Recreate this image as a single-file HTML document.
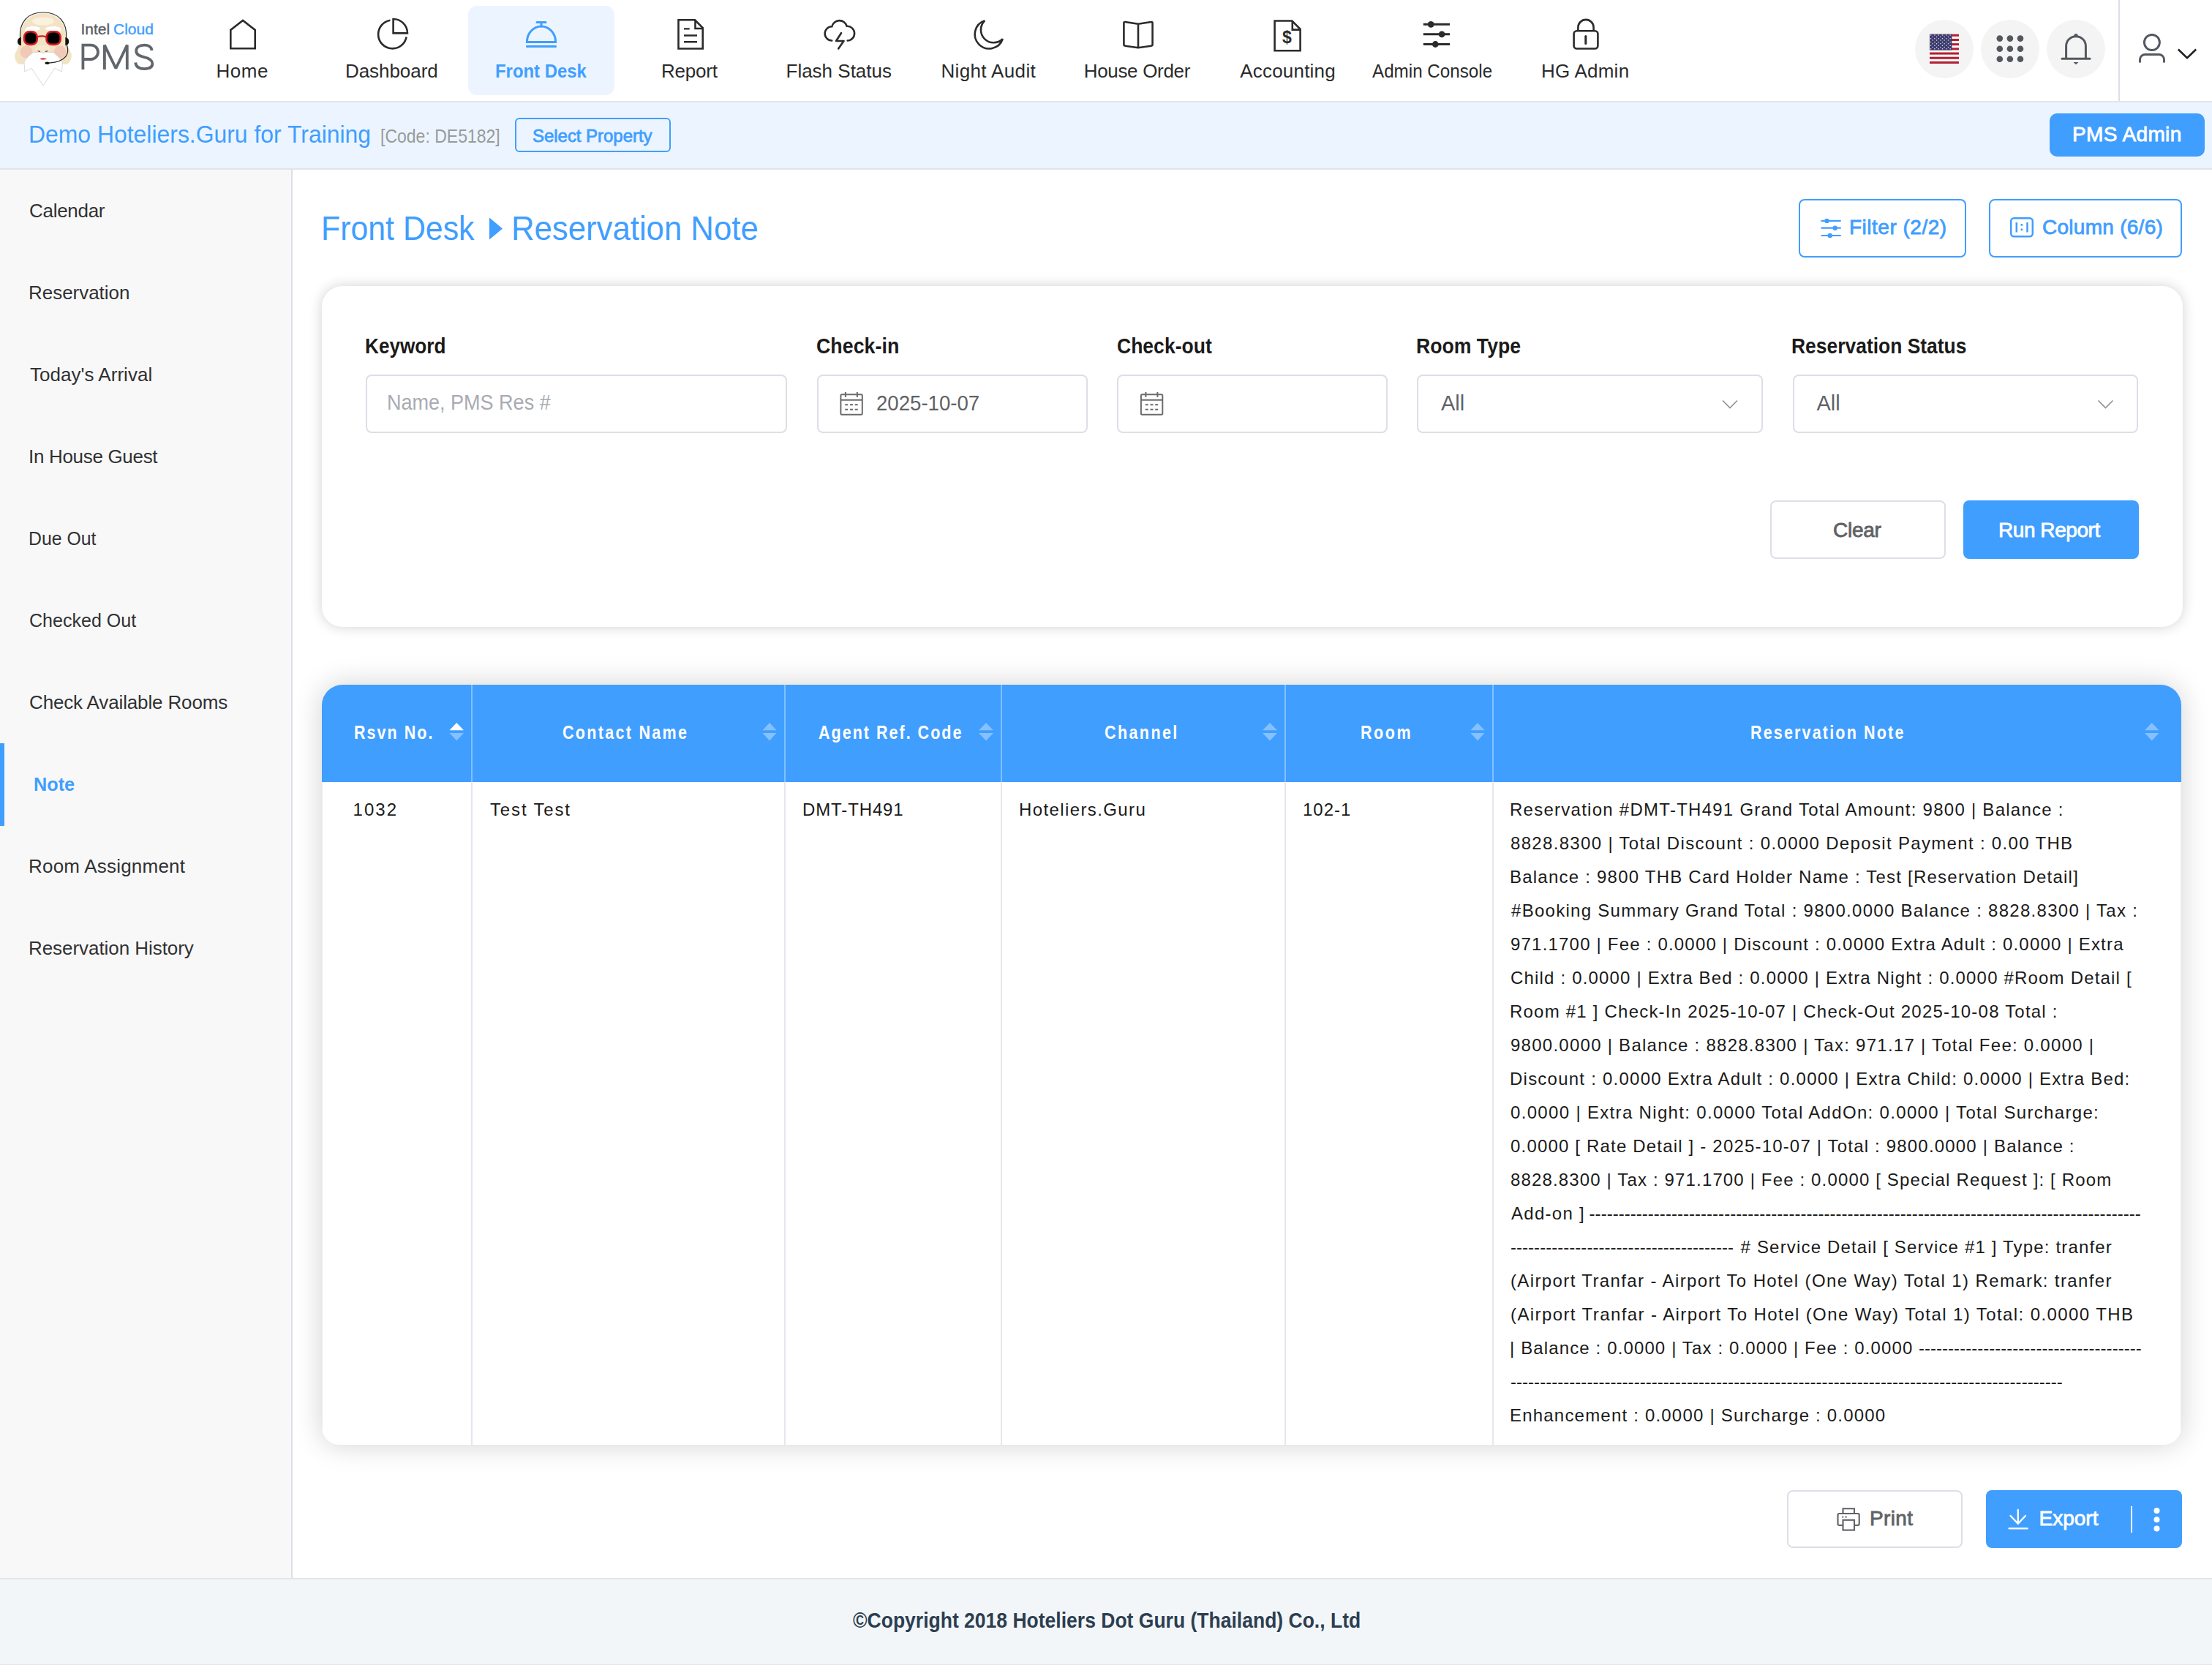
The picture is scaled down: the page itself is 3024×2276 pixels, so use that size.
<!DOCTYPE html>
<html><head><meta charset="utf-8">
<style>
*{margin:0;padding:0;box-sizing:border-box}
html,body{width:3024px;height:2276px;overflow:hidden;background:#fff;font-family:"Liberation Sans",sans-serif}
.a{position:absolute}
.t{position:absolute;line-height:1;white-space:nowrap}
svg{position:absolute;left:0;top:0;overflow:visible}
</style></head><body>

<!-- header -->
<div class="a" style="left:0;top:0;width:3024px;height:138px;background:#fff"></div>
<div class="a" style="left:0;top:138px;width:3024px;height:2px;background:#e1e4e9"></div>
<div class="a" style="left:640px;top:8px;width:200px;height:122px;border-radius:12px;background:#ecf5ff"></div>
<div class="a" style="left:2618px;top:27px;width:80px;height:80px;border-radius:50%;background:#f4f4f5"></div>
<div class="a" style="left:2708px;top:27px;width:80px;height:80px;border-radius:50%;background:#f4f4f5"></div>
<div class="a" style="left:2798px;top:27px;width:80px;height:80px;border-radius:50%;background:#f4f4f5"></div>
<div class="a" style="left:2896px;top:0;width:2px;height:138px;background:#dcdfe6"></div>

<!-- subheader -->
<div class="a" style="left:0;top:140px;width:3024px;height:90px;background:#ecf5ff"></div>
<div class="a" style="left:0;top:230px;width:3024px;height:2px;background:#e1e4e9"></div>
<div class="a" style="left:704px;top:161px;width:213px;height:47px;border:2px solid #409eff;border-radius:6px"></div>
<div class="a" style="left:2802px;top:155px;width:212px;height:59px;border-radius:10px;background:#409eff"></div>

<!-- sidebar -->
<div class="a" style="left:0;top:232px;width:398px;height:1925px;background:#f8f8f8"></div>
<div class="a" style="left:398px;top:232px;width:2px;height:1925px;background:#dcdfe6"></div>
<div class="a" style="left:0;top:1016px;width:6px;height:113px;background:#409eff"></div>

<!-- title buttons -->
<div class="a" style="left:2459px;top:272px;width:229px;height:80px;border:2px solid #409eff;border-radius:8px"></div>
<div class="a" style="left:2719px;top:272px;width:264px;height:80px;border:2px solid #409eff;border-radius:8px"></div>

<!-- filter card -->
<div class="a" style="left:440px;top:391px;width:2544px;height:466px;border-radius:28px;background:#fff;box-shadow:0 0 18px rgba(0,0,0,0.18)"></div>
<div class="a" style="left:500px;top:512px;width:576px;height:80px;border:2px solid #dcdfe6;border-radius:8px"></div>
<div class="a" style="left:1117px;top:512px;width:370px;height:80px;border:2px solid #dcdfe6;border-radius:8px"></div>
<div class="a" style="left:1527px;top:512px;width:370px;height:80px;border:2px solid #dcdfe6;border-radius:8px"></div>
<div class="a" style="left:1937px;top:512px;width:473px;height:80px;border:2px solid #dcdfe6;border-radius:8px"></div>
<div class="a" style="left:2451px;top:512px;width:472px;height:80px;border:2px solid #dcdfe6;border-radius:8px"></div>
<div class="a" style="left:2420px;top:684px;width:240px;height:80px;border:2px solid #dcdfe6;border-radius:8px"></div>
<div class="a" style="left:2684px;top:684px;width:240px;height:80px;border-radius:8px;background:#409eff"></div>

<!-- table -->
<div class="a" style="left:440px;top:936px;width:2542px;height:1039px;border-radius:28px 28px 24px 24px;background:#fff;box-shadow:0 0 38px rgba(0,0,0,0.18);overflow:hidden">
  <div class="a" style="left:0;top:133px;width:1px;height:906px;background:#ebeef5"></div>
  <div class="a" style="left:2541px;top:133px;width:1px;height:906px;background:#ebeef5"></div>
  <div class="a" style="left:0;top:0;width:2542px;height:133px;background:#409eff"></div>
  <div class="a" style="left:204px;top:0;width:2px;height:133px;background:rgba(255,255,255,0.35)"></div>
  <div class="a" style="left:632px;top:0;width:2px;height:133px;background:rgba(255,255,255,0.35)"></div>
  <div class="a" style="left:928px;top:0;width:2px;height:133px;background:rgba(255,255,255,0.35)"></div>
  <div class="a" style="left:1316px;top:0;width:2px;height:133px;background:rgba(255,255,255,0.35)"></div>
  <div class="a" style="left:1600px;top:0;width:2px;height:133px;background:rgba(255,255,255,0.35)"></div>
  <div class="a" style="left:204px;top:133px;width:2px;height:906px;background:#e4e7ed"></div>
  <div class="a" style="left:632px;top:133px;width:2px;height:906px;background:#e4e7ed"></div>
  <div class="a" style="left:928px;top:133px;width:2px;height:906px;background:#e4e7ed"></div>
  <div class="a" style="left:1316px;top:133px;width:2px;height:906px;background:#e4e7ed"></div>
  <div class="a" style="left:1600px;top:133px;width:2px;height:906px;background:#e4e7ed"></div>
</div>

<!-- print / export -->
<div class="a" style="left:2443px;top:2037px;width:240px;height:79px;border:2px solid #dcdfe6;border-radius:8px"></div>
<div class="a" style="left:2715px;top:2037px;width:268px;height:79px;border-radius:8px;background:#409eff"></div>
<div class="a" style="left:2913px;top:2059px;width:2px;height:36px;background:#fff"></div>

<!-- footer -->
<div class="a" style="left:0;top:2157px;width:3024px;height:2px;background:#e2e6ea"></div>
<div class="a" style="left:0;top:2159px;width:3024px;height:117px;background:#f3f6f9"></div>
<div class="a" style="left:0;top:2275px;width:3024px;height:1px;background:#e2e6ea"></div>

<!-- icons -->
<svg width="3024" height="2276" viewBox="0 0 3024 2276">
 <g fill="none" stroke="#2b2b2b" stroke-width="2.6">
  <!-- home -->
  <path d="M315.3 66.2 V41 L332 28 L348.7 41 V66.2 Z" stroke-linejoin="miter"/>
  <!-- dashboard -->
  <path d="M533.5 27.8 A19.4 19.4 0 1 0 555.6 50.4"/>
  <path d="M537.6 26 V45.4 H557 A19.4 19.4 0 0 0 537.6 26 Z"/>
  <!-- report -->
  <path d="M927.5 27.3 H950 L960.7 38 V66.5 H927.5 Z"/>
  <path d="M950.5 27.3 V39 H960.7"/>
  <path d="M935 39.4 H942.7 M935 48.5 H953 M935 57.3 H953" stroke-width="2.4"/>
  <!-- flash -->
  <path d="M1137.2 55.5 A9.6 9.6 0 0 1 1137.3 36.3 A10.6 10.6 0 0 1 1157.8 35.8 A9.8 9.8 0 0 1 1158.7 55.5" stroke-linecap="round"/>
  <path d="M1150 45.2 L1143 56 H1153.5 L1146.2 66.5" stroke-linecap="round" stroke-linejoin="round"/>
  <!-- moon -->
  <path d="M1346.2 28.2 A19.6 19.6 0 1 0 1370.8 53.3 A16.5 16.5 0 0 1 1346.2 28.2 Z" stroke-linejoin="miter"/>
  <!-- book -->
  <path d="M1556 32.8 L1538.3 30 Q1536.4 29.8 1536.4 31.7 V60.8 Q1536.4 62.4 1538.2 62.7 L1556 65.3 L1573.8 62.7 Q1575.6 62.4 1575.6 60.8 V31.7 Q1575.6 29.8 1573.7 30 Z M1556 32.8 V65.3" stroke-linejoin="round"/>
  <!-- accounting -->
  <path d="M1742.6 28.5 H1766.3 L1777.6 39.8 V69.3 H1742.6 Z"/>
  <path d="M1766.8 28.5 V40.6 H1777.6"/>
  <!-- admin console -->
  <path d="M1945.8 33.3 H1982 M1945.8 46.8 H1982 M1945.8 60.5 H1982" stroke-width="3"/>
  <!-- lock -->
  <rect x="2151.6" y="42.2" width="32.8" height="24.3" rx="4"/>
  <path d="M2157.4 42 V37.5 A10.6 10.6 0 0 1 2178.6 37.5 V42"/>
  <path d="M2167.8 49.5 V59.5" stroke-width="3" stroke-linecap="round"/>
 </g>
 <g fill="#2b2b2b">
  <circle cx="1956.2" cy="33.3" r="4.4"/><circle cx="1971.1" cy="46.8" r="4.4"/><circle cx="1962.3" cy="60.5" r="4.4"/>
  <text x="1753" y="58.6" font-family="Liberation Sans" font-weight="700" font-size="23">$</text>
 </g>
 <!-- front desk bell -->
 <g fill="none" stroke="#409eff" stroke-width="3" stroke-linecap="round">
  <path d="M720.4 57.5 A19.6 21.5 0 0 1 759.6 57.5 Z" stroke-linecap="butt"/>
  <path d="M734 30.5 H746 M740 31 V36 M720.4 63.4 H759.6"/>
 </g>
 <!-- header right icons -->
 <g>
  <rect x="2638" y="46.75" width="40" height="40.25" fill="#fff"/>
  <g fill="#b22234">
   <rect x="2638" y="46.75" width="40" height="3.1"/><rect x="2638" y="52.94" width="40" height="3.1"/><rect x="2638" y="59.13" width="40" height="3.1"/>
   <rect x="2638" y="65.32" width="40" height="3.1"/><rect x="2638" y="71.51" width="40" height="3.1"/><rect x="2638" y="77.7" width="40" height="3.1"/>
   <rect x="2638" y="83.9" width="40" height="3.1"/>
  </g>
  <rect x="2638" y="46.75" width="30.4" height="21.75" fill="#3c3b6e"/>
  <g fill="#e6e8f0"><circle cx="2639.60" cy="48.05" r="0.75"/><circle cx="2644.90" cy="48.05" r="0.75"/><circle cx="2650.20" cy="48.05" r="0.75"/><circle cx="2655.50" cy="48.05" r="0.75"/><circle cx="2660.80" cy="48.05" r="0.75"/><circle cx="2666.10" cy="48.05" r="0.75"/><circle cx="2642.25" cy="50.40" r="0.75"/><circle cx="2647.55" cy="50.40" r="0.75"/><circle cx="2652.85" cy="50.40" r="0.75"/><circle cx="2658.15" cy="50.40" r="0.75"/><circle cx="2663.45" cy="50.40" r="0.75"/><circle cx="2639.60" cy="52.75" r="0.75"/><circle cx="2644.90" cy="52.75" r="0.75"/><circle cx="2650.20" cy="52.75" r="0.75"/><circle cx="2655.50" cy="52.75" r="0.75"/><circle cx="2660.80" cy="52.75" r="0.75"/><circle cx="2666.10" cy="52.75" r="0.75"/><circle cx="2642.25" cy="55.10" r="0.75"/><circle cx="2647.55" cy="55.10" r="0.75"/><circle cx="2652.85" cy="55.10" r="0.75"/><circle cx="2658.15" cy="55.10" r="0.75"/><circle cx="2663.45" cy="55.10" r="0.75"/><circle cx="2639.60" cy="57.45" r="0.75"/><circle cx="2644.90" cy="57.45" r="0.75"/><circle cx="2650.20" cy="57.45" r="0.75"/><circle cx="2655.50" cy="57.45" r="0.75"/><circle cx="2660.80" cy="57.45" r="0.75"/><circle cx="2666.10" cy="57.45" r="0.75"/><circle cx="2642.25" cy="59.80" r="0.75"/><circle cx="2647.55" cy="59.80" r="0.75"/><circle cx="2652.85" cy="59.80" r="0.75"/><circle cx="2658.15" cy="59.80" r="0.75"/><circle cx="2663.45" cy="59.80" r="0.75"/><circle cx="2639.60" cy="62.15" r="0.75"/><circle cx="2644.90" cy="62.15" r="0.75"/><circle cx="2650.20" cy="62.15" r="0.75"/><circle cx="2655.50" cy="62.15" r="0.75"/><circle cx="2660.80" cy="62.15" r="0.75"/><circle cx="2666.10" cy="62.15" r="0.75"/><circle cx="2642.25" cy="64.50" r="0.75"/><circle cx="2647.55" cy="64.50" r="0.75"/><circle cx="2652.85" cy="64.50" r="0.75"/><circle cx="2658.15" cy="64.50" r="0.75"/><circle cx="2663.45" cy="64.50" r="0.75"/><circle cx="2639.60" cy="66.85" r="0.75"/><circle cx="2644.90" cy="66.85" r="0.75"/><circle cx="2650.20" cy="66.85" r="0.75"/><circle cx="2655.50" cy="66.85" r="0.75"/><circle cx="2660.80" cy="66.85" r="0.75"/><circle cx="2666.10" cy="66.85" r="0.75"/></g>
  <g fill="#54585e">
   <circle cx="2733.8" cy="52.6" r="4.3"/><circle cx="2747.9" cy="52.6" r="4.3"/><circle cx="2762" cy="52.6" r="4.3"/>
   <circle cx="2733.8" cy="66.7" r="4.3"/><circle cx="2747.9" cy="66.7" r="4.3"/><circle cx="2762" cy="66.7" r="4.3"/>
   <circle cx="2733.8" cy="80.8" r="4.3"/><circle cx="2747.9" cy="80.8" r="4.3"/><circle cx="2762" cy="80.8" r="4.3"/>
  </g>
  <g fill="none" stroke="#54585e" stroke-width="3">
   <path d="M2824.6 80 V63 A13.4 13.4 0 0 1 2851.4 63 V80"/>
   <path d="M2819 80.3 H2857" stroke-linecap="round"/>
  </g>
  <g fill="#54585e">
   <path d="M2834.5 85 H2841.5 L2838 88.3 Z"/>
   <circle cx="2838" cy="48.6" r="2.6"/>
  </g>
  <g fill="none" stroke="#54585e" stroke-width="2.9" stroke-linecap="round">
   <circle cx="2941.9" cy="58" r="10.5"/>
   <path d="M2925.5 84.6 V81.5 A7 7 0 0 1 2932.5 74.5 H2951.5 A7 7 0 0 1 2958.5 81.5 V84.6"/>
  </g>
  <path d="M2977.8 67.5 L2990 79.3 L3002.2 67.5" fill="none" stroke="#222" stroke-width="2.6"/>
 </g>

 <!-- PMS logo text -->
 <g fill="none" stroke="#62666d" stroke-width="3.8">
  <path d="M113.4 95 V61.6 H124.3 A9.7 9.7 0 0 1 124.3 81 H113.4"/>
  <path d="M142.9 95 V61.6 L158.4 93.5 L173.8 61.6 V95" stroke-linejoin="bevel"/>
  <path d="M207.6 69 C207.2 64 202.5 61.6 197.2 61.6 C190.5 61.6 186.2 64.8 186.2 69.6 C186.2 75 191 76.7 197.2 78.1 C203.6 79.6 208.4 81.8 208.4 87.1 C208.4 92 203.6 94.1 197.2 94.1 C190.7 94.1 185.6 91.5 185.2 85.5"/>
 </g>

 <!-- logo face -->
 <g>
  <path d="M59 18.3 C77 18.3 89 30 90 48 C90.5 58 93 66 97.5 73 C98.5 78 97 84 93 87 C90 89 86 88 84 86 L34 86 C32 88 28 89 25 87 C21 84 19.5 78 20.5 73 C25 66 27.5 58 28 48 C29 30 41 18.3 59 18.3 Z" fill="#f3e3c5"/>
  <ellipse cx="59" cy="29" rx="15" ry="5.5" fill="#faf1de"/>
  <circle cx="36" cy="71" r="8.5" fill="#f0c2b2" opacity="0.8"/>
  <circle cx="82" cy="71" r="8.5" fill="#f0c2b2" opacity="0.8"/>
  <path d="M33.8 42.4 Q35 36 44 36 Q53 36 55 39 Q54 42 45 42.4 Z" fill="#fff"/>
  <path d="M84 42.4 Q83 36 74 36 Q65 36 61.6 39 Q63 42 73 42.4 Z" fill="#fff"/>
  <rect x="33.1" y="43.3" width="17.6" height="17.6" rx="7" fill="#000" stroke="#d41c24" stroke-width="2.6"/>
  <rect x="63.5" y="43.3" width="19.2" height="17.6" rx="7" fill="#000" stroke="#d41c24" stroke-width="2.6"/>
  <path d="M50.5 50.8 Q57 48 63.5 50.8" fill="none" stroke="#d41c24" stroke-width="2.2"/>
  <path d="M27.5 52 C26 30 38 17 59 17 C80 17 92 30 90.7 52" fill="none" stroke="#333" stroke-width="1.2"/>
  <path d="M28.9 51 A5 5.6 0 0 0 28.9 62.2 Z" fill="#111"/>
  <path d="M89.3 51 A5 5.6 0 0 1 89.3 62.2 Z" fill="#111"/>
  <ellipse cx="58.5" cy="67" rx="10" ry="5.5" fill="#f7e9cf"/>
  <path d="M51.5 70 Q53 69.5 55 70.6 M62 70.6 Q64 69.5 65.5 70" stroke="#6b4a2a" stroke-width="1.2" fill="none"/>
  <path d="M45 72 C51 70.5 55 71.5 59 72.5 C63 71.5 67 70.5 73.5 72 C78 76 83 80 85.4 84.7 L84.7 98 L74.8 93.3 L59 117 L43 93.3 L33.8 98 L33 84.7 C35 80 40 76 45 72 Z" fill="#fff" stroke="#cfcfcf" stroke-width="0.8"/>
  <path d="M54 80.5 Q59 77.5 64 80.5 Q59 83 54 80.5 Z" fill="#d9534f"/>
  <path d="M91.5 62 C95 72 92 84 67 86.2" fill="none" stroke="#222" stroke-width="1.2"/>
  <ellipse cx="64.5" cy="86.3" rx="3" ry="1.7" fill="#111"/>
 </g>

 <!-- title triangle -->
 <path d="M669 297.5 L687 312.5 L669 327.5 Z" fill="#409eff"/>

 <!-- filter icon -->
 <g stroke="#409eff" stroke-width="2.2" fill="none">
  <path d="M2489.5 301.9 H2516.7 M2489.5 311.7 H2516.7 M2489.5 322 H2516.7"/>
 </g>
 <g fill="#409eff"><circle cx="2497.5" cy="301.9" r="3.2"/><circle cx="2508.7" cy="311.7" r="3.2"/><circle cx="2501.7" cy="322" r="3.2"/></g>
 <!-- column icon -->
 <g stroke="#409eff" stroke-width="2.5" fill="none">
  <rect x="2749.2" y="298.2" width="29.6" height="25" rx="4"/>
  <path d="M2756.8 304 V317.5 M2771.5 304 V317.5"/>
 </g>
 <g fill="#409eff"><circle cx="2763.9" cy="307.3" r="1.5"/><circle cx="2763.9" cy="313.7" r="1.5"/></g>

 <!-- calendar icons -->
 <g id="cal" fill="none" stroke="#6b6b6b" stroke-width="2">
  <rect x="1149.4" y="539.3" width="29.4" height="27.4" rx="1.5"/>
  <path d="M1149.4 546.7 H1178.8 M1155.9 536 V543 M1171.9 536 V543"/>
  <path d="M1155.2 553.3 H1159.2 M1162 553.3 H1166 M1168.7 553.3 H1172.7 M1155.2 559.8 H1159.2 M1162 559.8 H1166 M1168.7 559.8 H1172.7"/>
 </g>
 <g fill="none" stroke="#6b6b6b" stroke-width="2" transform="translate(410.5 0)">
  <rect x="1149.4" y="539.3" width="29.4" height="27.4" rx="1.5"/>
  <path d="M1149.4 546.7 H1178.8 M1155.9 536 V543 M1171.9 536 V543"/>
  <path d="M1155.2 553.3 H1159.2 M1162 553.3 H1166 M1168.7 553.3 H1172.7 M1155.2 559.8 H1159.2 M1162 559.8 H1166 M1168.7 559.8 H1172.7"/>
 </g>
 <!-- dropdown chevrons -->
 <path d="M2355 547.5 L2365 557.5 L2375 547.5" fill="none" stroke="#909399" stroke-width="1.7"/>
 <path d="M2868.5 547.5 L2878.5 557.5 L2888.5 547.5" fill="none" stroke="#909399" stroke-width="1.7"/>

 <!-- sort icons -->
 <g>
  <path d="M614.5 998.3 L624.25 988 L634 998.3 Z" fill="#fff"/>
  <path d="M614.5 1002 L624.25 1012.5 L634 1002 Z" fill="rgba(255,255,255,0.36)"/>
  <path d="M1042.5 998.3 L1052 988 L1061.5 998.3 Z M1042.5 1002 L1052 1012.5 L1061.5 1002 Z" fill="rgba(255,255,255,0.36)"/>
  <path d="M1338 998.3 L1348 988 L1358 998.3 Z M1338 1002 L1348 1012.5 L1358 1002 Z" fill="rgba(255,255,255,0.36)"/>
  <path d="M1726 998.3 L1736 988 L1746 998.3 Z M1726 1002 L1736 1012.5 L1746 1002 Z" fill="rgba(255,255,255,0.36)"/>
  <path d="M2010.5 998.3 L2020 988 L2029.5 998.3 Z M2010.5 1002 L2020 1012.5 L2029.5 1002 Z" fill="rgba(255,255,255,0.36)"/>
  <path d="M2932 998.3 L2941.75 988 L2951.5 998.3 Z M2932 1002 L2941.75 1012.5 L2951.5 1002 Z" fill="rgba(255,255,255,0.36)"/>
 </g>

 <!-- print icon -->
 <g fill="none" stroke="#606266" stroke-width="2.1">
  <path d="M2519.5 2068 V2062.3 H2535 V2068"/>
  <path d="M2519.5 2085 H2514.5 Q2512.5 2085 2512.5 2083 V2071 Q2512.5 2069 2514.5 2069 H2539.7 Q2541.7 2069 2541.7 2071 V2083 Q2541.7 2085 2539.7 2085 H2535"/>
  <rect x="2519.5" y="2077.8" width="15.5" height="13.8"/>
 </g>
 <g fill="#606266"><rect x="2518.2" y="2072.6" width="2" height="2"/><rect x="2522.6" y="2072.6" width="2" height="2"/></g>
 <!-- export icon -->
 <g fill="none" stroke="#fff" stroke-width="2.3" stroke-linecap="round">
  <path d="M2758.8 2064 V2083 M2748.5 2072 L2758.8 2082.8 L2769 2072"/>
  <path d="M2746.5 2089.3 H2771.8"/>
 </g>
 <g fill="#fff"><circle cx="2948.5" cy="2065" r="4"/><circle cx="2948.5" cy="2077.3" r="4"/><circle cx="2948.5" cy="2089.5" r="4"/></g>
</svg>

<div class="t" style="top:83.90px;font-size:26px;color:#2b2b2b;letter-spacing:0.500px;left:295.50px;">Home</div>
<div class="t" style="top:83.90px;font-size:26px;color:#2b2b2b;letter-spacing:-0.062px;left:472.00px;">Dashboard</div>
<div class="t" style="top:83.90px;font-size:26px;color:#409eff;font-weight:700;left:676.58px;transform:scaleX(0.9185185185185185);transform-origin:0 0;">Front Desk</div>
<div class="t" style="top:83.90px;font-size:26px;color:#2b2b2b;letter-spacing:-0.200px;left:904.00px;">Report</div>
<div class="t" style="top:83.90px;font-size:26px;color:#2b2b2b;left:1074.50px;">Flash Status</div>
<div class="t" style="top:83.90px;font-size:26px;color:#2b2b2b;letter-spacing:0.360px;left:1286.40px;">Night Audit</div>
<div class="t" style="top:83.90px;font-size:26px;color:#2b2b2b;letter-spacing:-0.320px;left:1481.70px;">House Order</div>
<div class="t" style="top:83.90px;font-size:26px;color:#2b2b2b;letter-spacing:0.189px;left:1695.30px;">Accounting</div>
<div class="t" style="top:83.90px;font-size:26px;color:#2b2b2b;left:1876.00px;transform:scaleX(0.9308571428571429);transform-origin:0 0;">Admin Console</div>
<div class="t" style="top:83.90px;font-size:26px;color:#2b2b2b;letter-spacing:0.229px;left:2107.00px;">HG Admin</div>
<div class="t" style="top:29.15px;font-size:21px;color:#5a5e66;left:110.50px;-webkit-text-stroke:0.4px #5a5e66;">Intel</div>
<div class="t" style="top:29.15px;font-size:21px;color:#409eff;left:155.00px;-webkit-text-stroke:0.4px #409eff;">Cloud</div>
<div class="t" style="top:166.95px;font-size:33px;color:#409eff;left:39.07px;transform:scaleX(0.9666666666666667);transform-origin:0 0;">Demo Hoteliers.Guru for Training</div>
<div class="t" style="top:173.75px;font-size:25px;color:#9a9a9a;left:520.08px;transform:scaleX(0.9204545454545454);transform-origin:0 0;">[Code: DE5182]</div>
<div class="t" style="top:173.60px;font-size:24px;color:#409eff;letter-spacing:-0.036px;left:728.00px;-webkit-text-stroke:0.8px #409eff;">Select Property</div>
<div class="t" style="top:170.20px;font-size:28px;color:#fff;letter-spacing:0.375px;left:2833.00px;-webkit-text-stroke:0.8px #fff;">PMS Admin</div>
<div class="t" style="top:274.90px;font-size:26px;color:#303133;letter-spacing:-0.286px;left:40.00px;">Calendar</div>
<div class="t" style="top:386.90px;font-size:26px;color:#303133;letter-spacing:-0.030px;left:39.00px;">Reservation</div>
<div class="t" style="top:498.90px;font-size:26px;color:#303133;letter-spacing:0.029px;left:41.00px;">Today's Arrival</div>
<div class="t" style="top:610.90px;font-size:26px;color:#303133;letter-spacing:-0.315px;left:39.00px;">In House Guest</div>
<div class="t" style="top:722.90px;font-size:26px;color:#303133;left:39.09px;transform:scaleX(0.9536842105263157);transform-origin:0 0;">Due Out</div>
<div class="t" style="top:834.90px;font-size:26px;color:#303133;left:40.04px;transform:scaleX(0.9635761589403974);transform-origin:0 0;">Checked Out</div>
<div class="t" style="top:946.90px;font-size:26px;color:#303133;letter-spacing:-0.145px;left:40.00px;">Check Available Rooms</div>
<div class="t" style="top:1058.90px;font-size:26px;color:#409eff;font-weight:700;left:46.03px;transform:scaleX(0.9714285714285714);transform-origin:0 0;">Note</div>
<div class="t" style="top:1170.90px;font-size:26px;color:#303133;letter-spacing:0.214px;left:39.00px;">Room Assignment</div>
<div class="t" style="top:1282.90px;font-size:26px;color:#303133;letter-spacing:-0.056px;left:39.00px;">Reservation History</div>
<div class="t" style="top:287.55px;font-size:47px;color:#409eff;left:438.85px;transform:scaleX(0.911504424778761);transform-origin:0 0;">Front Desk</div>
<div class="t" style="top:287.55px;font-size:47px;color:#409eff;left:699.28px;transform:scaleX(0.9299719887955182);transform-origin:0 0;">Reservation Note</div>
<div class="t" style="top:297.20px;font-size:28px;color:#409eff;letter-spacing:0.500px;left:2528.00px;-webkit-text-stroke:0.8px #409eff;">Filter (2/2)</div>
<div class="t" style="top:297.20px;font-size:28px;color:#409eff;letter-spacing:0.273px;left:2792.00px;-webkit-text-stroke:0.8px #409eff;">Column (6/6)</div>
<div class="t" style="top:459.35px;font-size:29px;color:#1a1a1a;font-weight:700;left:498.69px;transform:scaleX(0.9025210084033614);transform-origin:0 0;">Keyword</div>
<div class="t" style="top:459.35px;font-size:29px;color:#1a1a1a;font-weight:700;left:1116.08px;transform:scaleX(0.925);transform-origin:0 0;">Check-in</div>
<div class="t" style="top:459.35px;font-size:29px;color:#1a1a1a;font-weight:700;left:1526.59px;transform:scaleX(0.9148936170212766);transform-origin:0 0;">Check-out</div>
<div class="t" style="top:459.35px;font-size:29px;color:#1a1a1a;font-weight:700;left:1935.66px;transform:scaleX(0.9183006535947712);transform-origin:0 0;">Room Type</div>
<div class="t" style="top:459.35px;font-size:29px;color:#1a1a1a;font-weight:700;left:2449.18px;transform:scaleX(0.9115384615384615);transform-origin:0 0;">Reservation Status</div>
<div class="t" style="top:536.35px;font-size:29px;color:#a8abb2;left:529.14px;transform:scaleX(0.9315126050420167);transform-origin:0 0;">Name, PMS Res #</div>
<div class="t" style="top:537.35px;font-size:29px;color:#606266;left:1198.05px;transform:scaleX(0.952054794520548);transform-origin:0 0;">2025-10-07</div>
<div class="t" style="top:537.35px;font-size:29px;color:#606266;left:1970.00px;">All</div>
<div class="t" style="top:537.35px;font-size:29px;color:#606266;left:2483.50px;">All</div>
<div class="t" style="top:710.70px;font-size:28px;color:#606266;letter-spacing:-0.250px;left:2506.00px;-webkit-text-stroke:0.8px #606266;">Clear</div>
<div class="t" style="top:710.70px;font-size:28px;color:#fff;letter-spacing:-0.444px;left:2732.00px;-webkit-text-stroke:0.8px #fff;">Run Report</div>
<div class="t" style="top:989.25px;font-size:25px;color:#fff;font-weight:700;letter-spacing:2.382px;left:483.64px;transform:scaleX(0.86);transform-origin:0 0;">Rsvn No.</div>
<div class="t" style="top:989.25px;font-size:25px;color:#fff;font-weight:700;letter-spacing:2.683px;left:769.14px;transform:scaleX(0.86);transform-origin:0 0;">Contact Name</div>
<div class="t" style="top:989.25px;font-size:25px;color:#fff;font-weight:700;letter-spacing:2.339px;left:1119.00px;transform:scaleX(0.86);transform-origin:0 0;">Agent Ref. Code</div>
<div class="t" style="top:989.25px;font-size:25px;color:#fff;font-weight:700;letter-spacing:2.798px;left:1509.54px;transform:scaleX(0.86);transform-origin:0 0;">Channel</div>
<div class="t" style="top:989.25px;font-size:25px;color:#fff;font-weight:700;letter-spacing:2.969px;left:1860.14px;transform:scaleX(0.86);transform-origin:0 0;">Room</div>
<div class="t" style="top:989.25px;font-size:25px;color:#fff;font-weight:700;letter-spacing:2.524px;left:2393.14px;transform:scaleX(0.86);transform-origin:0 0;">Reservation Note</div>
<div class="t" style="top:1095.10px;font-size:24px;color:#1a1a1a;letter-spacing:2.083px;left:482.50px;">1032</div>
<div class="t" style="top:1095.10px;font-size:24px;color:#1a1a1a;letter-spacing:1.844px;left:670.00px;">Test Test</div>
<div class="t" style="top:1095.10px;font-size:24px;color:#1a1a1a;letter-spacing:0.875px;left:1097.00px;">DMT-TH491</div>
<div class="t" style="top:1095.10px;font-size:24px;color:#1a1a1a;letter-spacing:1.385px;left:1393.00px;">Hoteliers.Guru</div>
<div class="t" style="top:1095.10px;font-size:24px;color:#1a1a1a;letter-spacing:1.000px;left:1781.00px;">102-1</div>
<div class="t" style="top:1095.10px;font-size:24px;color:#1a1a1a;letter-spacing:1.259px;left:2064.00px;">Reservation #DMT-TH491 Grand Total Amount: 9800 | Balance :</div>
<div class="t" style="top:1141.10px;font-size:24px;color:#1a1a1a;letter-spacing:1.328px;left:2065.00px;">8828.8300 | Total Discount : 0.0000 Deposit Payment : 0.00 THB</div>
<div class="t" style="top:1187.10px;font-size:24px;color:#1a1a1a;letter-spacing:1.226px;left:2064.00px;">Balance : 9800 THB Card Holder Name : Test [Reservation Detail]</div>
<div class="t" style="top:1233.10px;font-size:24px;color:#1a1a1a;letter-spacing:1.284px;left:2066.00px;">#Booking Summary Grand Total : 9800.0000 Balance : 8828.8300 | Tax :</div>
<div class="t" style="top:1279.10px;font-size:24px;color:#1a1a1a;letter-spacing:1.197px;left:2065.00px;">971.1700 | Fee : 0.0000 | Discount : 0.0000 Extra Adult : 0.0000 | Extra</div>
<div class="t" style="top:1325.10px;font-size:24px;color:#1a1a1a;letter-spacing:1.181px;left:2065.00px;">Child : 0.0000 | Extra Bed : 0.0000 | Extra Night : 0.0000 #Room Detail [</div>
<div class="t" style="top:1371.10px;font-size:24px;color:#1a1a1a;letter-spacing:1.214px;left:2064.00px;">Room #1 ] Check-In 2025-10-07 | Check-Out 2025-10-08 Total :</div>
<div class="t" style="top:1417.10px;font-size:24px;color:#1a1a1a;letter-spacing:1.258px;left:2065.00px;">9800.0000 | Balance : 8828.8300 | Tax: 971.17 | Total Fee: 0.0000 |</div>
<div class="t" style="top:1463.10px;font-size:24px;color:#1a1a1a;letter-spacing:1.236px;left:2064.00px;">Discount : 0.0000 Extra Adult : 0.0000 | Extra Child: 0.0000 | Extra Bed:</div>
<div class="t" style="top:1509.10px;font-size:24px;color:#1a1a1a;letter-spacing:1.329px;left:2065.00px;">0.0000 | Extra Night: 0.0000 Total AddOn: 0.0000 | Total Surcharge:</div>
<div class="t" style="top:1555.10px;font-size:24px;color:#1a1a1a;letter-spacing:1.182px;left:2065.00px;">0.0000 [ Rate Detail ] - 2025-10-07 | Total : 9800.0000 | Balance :</div>
<div class="t" style="top:1601.10px;font-size:24px;color:#1a1a1a;letter-spacing:1.147px;left:2065.00px;">8828.8300 | Tax : 971.1700 | Fee : 0.0000 [ Special Request ]: [ Room</div>
<div class="t" style="top:1647.10px;font-size:24px;color:#1a1a1a;letter-spacing:1.286px;left:2066.00px;">Add-on ]</div>
<div class="t" style="top:1647.10px;font-size:24px;color:#1a1a1a;letter-spacing:0.031px;left:2172.60px;">----------------------------------------------------------------------------------------------</div>
<div class="t" style="top:1693.10px;font-size:24px;color:#1a1a1a;letter-spacing:0.038px;left:2065.00px;">--------------------------------------</div>
<div class="t" style="top:1693.10px;font-size:24px;color:#1a1a1a;letter-spacing:1.168px;left:2379.60px;"># Service Detail [ Service #1 ] Type: tranfer</div>
<div class="t" style="top:1739.10px;font-size:24px;color:#1a1a1a;letter-spacing:1.377px;left:2065.00px;">(Airport Tranfar - Airport To Hotel (One Way) Total 1) Remark: tranfer</div>
<div class="t" style="top:1785.10px;font-size:24px;color:#1a1a1a;letter-spacing:1.408px;left:2065.00px;">(Airport Tranfar - Airport To Hotel (One Way) Total 1) Total: 0.0000 THB</div>
<div class="t" style="top:1831.10px;font-size:24px;color:#1a1a1a;letter-spacing:1.128px;left:2064.00px;">| Balance : 0.0000 | Tax : 0.0000 | Fee : 0.0000</div>
<div class="t" style="top:1831.10px;font-size:24px;color:#1a1a1a;letter-spacing:0.027px;left:2623.00px;">--------------------------------------</div>
<div class="t" style="top:1877.10px;font-size:24px;color:#1a1a1a;letter-spacing:0.038px;left:2065.00px;">----------------------------------------------------------------------------------------------</div>
<div class="t" style="top:1923.10px;font-size:24px;color:#1a1a1a;letter-spacing:1.200px;left:2064.00px;">Enhancement : 0.0000 | Surcharge : 0.0000</div>
<div class="t" style="top:2062.20px;font-size:28px;color:#606266;letter-spacing:0.375px;left:2556.00px;-webkit-text-stroke:0.8px #606266;">Print</div>
<div class="t" style="top:2062.20px;font-size:28px;color:#fff;left:2787.50px;-webkit-text-stroke:0.8px #fff;">Export</div>
<div class="t" style="top:2201.35px;font-size:29px;color:#2c3e50;font-weight:700;left:1165.80px;transform:scaleX(0.9142480211081794);transform-origin:0 0;">©Copyright 2018 Hoteliers Dot Guru (Thailand) Co., Ltd</div>
</body></html>
